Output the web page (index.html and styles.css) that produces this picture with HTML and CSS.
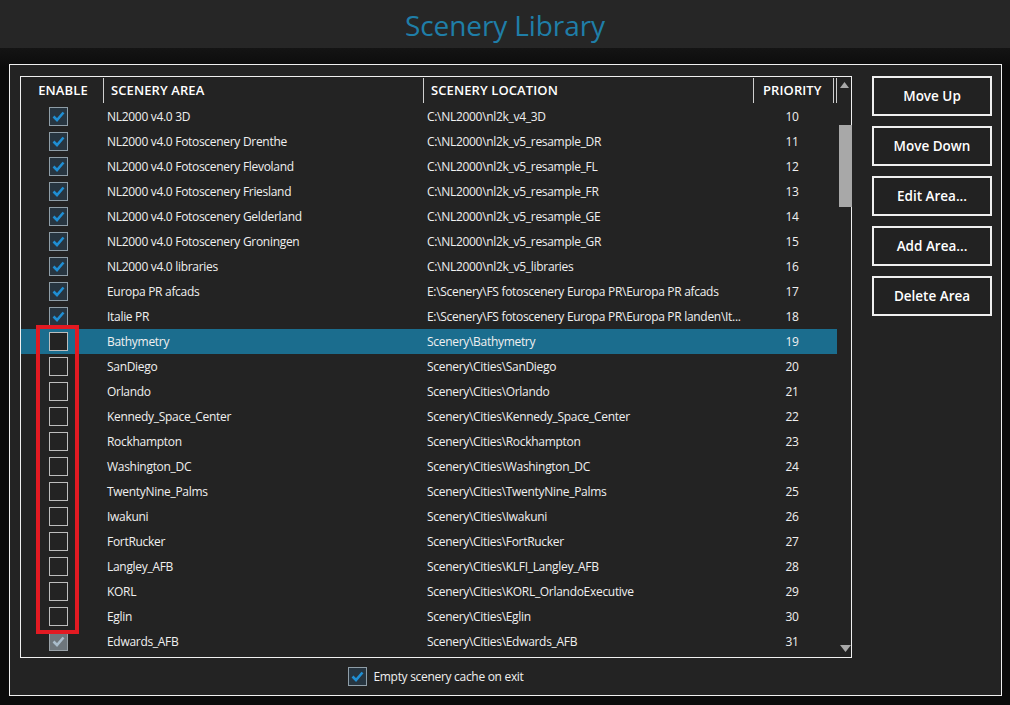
FILE: index.html
```html
<!DOCTYPE html>
<html>
<head>
<meta charset="utf-8">
<link rel="stylesheet" href="styles.css">
</head>
<body>
<header class="titlebar"><h1 class="title">Scenery Library</h1></header>
<main class="stage">
  <section class="panel">
    <div class="left">
      <div class="grid-box">
        <div class="list">
          <div class="head">
            <div class="hc hc-enable">ENABLE</div>
            <div class="hc hc-area">SCENERY AREA</div>
            <div class="hc hc-loc">SCENERY LOCATION</div>
            <div class="hc hc-pri">PRIORITY</div>
            <div class="hc hc-end"></div>
          </div>
          <div class="rows" id="rows"></div>
        </div>
        <div class="scroll">
          <svg class="arrow up" width="9" height="6" viewBox="0 0 9 6"><path d="M0 6 L4.5 0 L9 6 Z" fill="#a8a8a8"/></svg>
          <div class="thumb"></div>
          <div class="spacer"></div>
          <svg class="arrow down" width="11" height="7" viewBox="0 0 11 7"><path d="M0 0 L11 0 L5.5 7 Z" fill="#a8a8a8"/></svg>
        </div>
      </div>
      <div class="footer">
        <span class="cb checked"><svg width="17" height="17" viewBox="0 0 17 17"><path d="M3.5 8.5 L7 12 L13.5 4.5" fill="none" stroke="#1f8fd4" stroke-width="2.6"/></svg></span>
        <span class="footer-label">Empty scenery cache on exit</span>
      </div>
    </div>
    <div class="buttons">
      <button class="btn">Move Up</button>
      <button class="btn">Move Down</button>
      <button class="btn">Edit Area...</button>
      <button class="btn">Add Area...</button>
      <button class="btn">Delete Area</button>
    </div>
    <div class="annotation"></div>
  </section>
</main>
<script src="app.js"></script>
</body>
</html>
```

FILE: app.js
```js
const data = [
  [1, "NL2000 v4.0 3D", "C:\\NL2000\\nl2k_v4_3D", 10],
  [1, "NL2000 v4.0 Fotoscenery Drenthe", "C:\\NL2000\\nl2k_v5_resample_DR", 11],
  [1, "NL2000 v4.0 Fotoscenery Flevoland", "C:\\NL2000\\nl2k_v5_resample_FL", 12],
  [1, "NL2000 v4.0 Fotoscenery Friesland", "C:\\NL2000\\nl2k_v5_resample_FR", 13],
  [1, "NL2000 v4.0 Fotoscenery Gelderland", "C:\\NL2000\\nl2k_v5_resample_GE", 14],
  [1, "NL2000 v4.0 Fotoscenery Groningen", "C:\\NL2000\\nl2k_v5_resample_GR", 15],
  [1, "NL2000 v4.0 libraries", "C:\\NL2000\\nl2k_v5_libraries", 16],
  [1, "Europa PR afcads", "E:\\Scenery\\FS fotoscenery Europa PR\\Europa PR afcads", 17],
  [1, "Italie PR", "E:\\Scenery\\FS fotoscenery Europa PR\\Europa PR landen\\It...", 18],
  [0, "Bathymetry", "Scenery\\Bathymetry", 19, "sel"],
  [0, "SanDiego", "Scenery\\Cities\\SanDiego", 20],
  [0, "Orlando", "Scenery\\Cities\\Orlando", 21],
  [0, "Kennedy_Space_Center", "Scenery\\Cities\\Kennedy_Space_Center", 22],
  [0, "Rockhampton", "Scenery\\Cities\\Rockhampton", 23],
  [0, "Washington_DC", "Scenery\\Cities\\Washington_DC", 24],
  [0, "TwentyNine_Palms", "Scenery\\Cities\\TwentyNine_Palms", 25],
  [0, "Iwakuni", "Scenery\\Cities\\Iwakuni", 26],
  [0, "FortRucker", "Scenery\\Cities\\FortRucker", 27],
  [0, "Langley_AFB", "Scenery\\Cities\\KLFI_Langley_AFB", 28],
  [0, "KORL", "Scenery\\Cities\\KORL_OrlandoExecutive", 29],
  [0, "Eglin", "Scenery\\Cities\\Eglin", 30],
  [2, "Edwards_AFB", "Scenery\\Cities\\Edwards_AFB", 31]
];
const check = (c) => '<svg width="17" height="17" viewBox="0 0 17 17"><path d="M3.5 8.5 L7 12 L13.5 4.5" fill="none" stroke="' + c + '" stroke-width="2.6"/></svg>';
const rows = document.getElementById("rows");
rows.innerHTML = data.map(([st, area, loc, pri, sel]) => {
  let cb = '<span class="cb"></span>';
  if (st === 1) cb = '<span class="cb checked">' + check("#1f8fd4") + '</span>';
  if (st === 2) cb = '<span class="cb disabled">' + check("#a9bccb") + '</span>';
  return '<div class="row' + (sel ? ' selected' : '') + '">' +
    '<div class="c c-enable">' + cb + '</div>' +
    '<div class="c c-area">' + area + '</div>' +
    '<div class="c c-loc">' + loc + '</div>' +
    '<div class="c c-pri">' + pri + '</div></div>';
}).join("");
```

FILE: styles.css
```css
* { box-sizing: border-box; }
html, body { margin: 0; padding: 0; }
body {
  width: 1010px;
  height: 705px;
  background: #0b0b0b;
  font-family: "Open Sans", "Noto Sans", sans-serif;
  color: #f2f2f2;
  overflow: hidden;
}
.titlebar {
  height: 48px;
  background: #262626;
  display: flex;
  justify-content: center;
  align-items: center;
}
.title {
  margin: 0;
  font-weight: 400;
  font-size: 28px;
  color: #1f7ea8;
  letter-spacing: -0.1px;
  padding-top: 2px;
}
.stage {
  padding: 16px 0 0 9px;
  background: linear-gradient(180deg, #141414 0, #0b0b0b 20px);
}
.panel {
  position: relative;
  width: 993px;
  height: 632px;
  border: 1px solid #f0f0f0;
  background: #232323;
  padding: 11px 10px 0 10px;
  display: flex;
  gap: 20px;
}
.left { width: 832px; display: flex; flex-direction: column; }
.grid-box {
  height: 582px;
  border: 1px solid #f0f0f0;
  display: flex;
}
.list { width: 816px; display: flex; flex-direction: column; }
.head {
  height: 27px;
  display: grid;
  grid-template-columns: 82px 320px 330px 81px 3px;
  font-weight: 600;
  font-size: 13px;
  letter-spacing: 0.1px;
  color: #ffffff;
}
.hc {
  display: flex;
  align-items: center;
  height: 25px;
  margin-top: 1px;
  padding-bottom: 2px;
}
.hc-enable { justify-content: center; padding-left: 2px; }
.hc-area { border-left: 1px solid #cfcfcf; padding-left: 7px; }
.hc-loc { border-left: 1px solid #cfcfcf; padding-left: 7px; }
.hc-pri { border-left: 1px solid #cfcfcf; border-right: 1px solid #cfcfcf; padding-left: 9px; }
.hc-end { border-right: 1px solid #cfcfcf; }
.rows { display: flex; flex-direction: column; }
.row {
  height: 25px;
  display: grid;
  grid-template-columns: 82px 320px 330px 84px;
  align-items: center;
  font-size: 12px;
  letter-spacing: -0.3px;
  color: #f0f0f0;
}
.row.selected { background: #1b6d8e; }
.c { white-space: nowrap; overflow: hidden; }
.c-enable { padding-left: 28px; display: flex; align-items: center; }
.c-area { padding-left: 4px; }
.c-loc { padding-left: 4px; }
.c-pri { text-align: center; padding-right: 6px; }
.cb {
  width: 19px;
  height: 19px;
  border: 1px solid #bdbdbd;
  background: #232323;
  display: inline-flex;
  align-items: center;
  justify-content: center;
  flex: none;
}
.cb.checked { background: #273540; border-color: #8f9ea8; }
.cb.disabled { background: #6e767c; border-color: #9aa2a8; }
.scroll {
  width: 14px;
  display: flex;
  flex-direction: column;
  align-items: center;
  padding-top: 5px;
  padding-left: 1px;
}
.arrow.up { flex: none; }
.thumb {
  width: 13px;
  height: 82px;
  background: #a8a8a8;
  margin-top: 37px;
  margin-left: 1px;
}
.spacer { flex: 1; }
.arrow.down { margin-bottom: 5px; margin-left: 1px; }
.footer {
  height: 37px;
  display: flex;
  align-items: center;
  justify-content: center;
  gap: 6px;
  padding-bottom: 1px;
}
.footer-label { font-size: 12px; letter-spacing: -0.3px; color: #f0f0f0; }
.buttons {
  display: flex;
  flex-direction: column;
  gap: 10px;
}
.btn {
  width: 120px;
  height: 40px;
  border: 2px solid #f0f0f0;
  background: #222222;
  color: #ffffff;
  font-family: "Open Sans", "Noto Sans", sans-serif;
  font-weight: 600;
  font-size: 13.5px;
  padding: 0;
}
.annotation {
  position: absolute;
  left: 26px;
  top: 260px;
  width: 43px;
  height: 309px;
  border: 4px solid #e21a22;
}
```
